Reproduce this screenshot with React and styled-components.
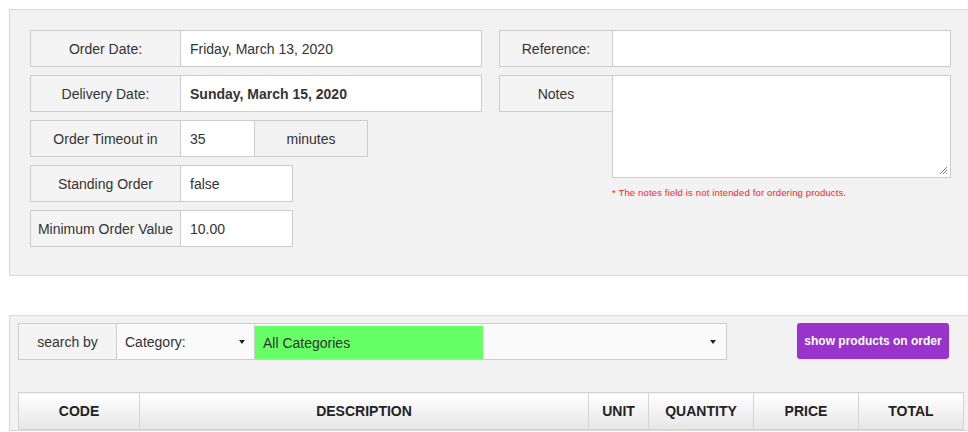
import React from "react";
import styled, { createGlobalStyle } from "styled-components";

const Global = createGlobalStyle`
  html, body { margin: 0; padding: 0; overflow: hidden; background: #fff; }
  body { font-family: "Liberation Sans", Arial, sans-serif; font-size: 14px; color: #333; }
  * { box-sizing: border-box; }
`;

const Page = styled.div`
  padding: 9px 0 0 9px;
  width: 1000px;
`;

const Panel = styled.section`
  background: #f2f2f2;
  border: 1px solid #d9d9d9;
  border-right: none;
  padding: ${(p) => p.$pad};
  margin-bottom: ${(p) => p.$mb || 0}px;
`;

const Columns = styled.div`
  display: grid;
  grid-template-columns: 452px 452px;
  column-gap: 17px;
`;

const Stack = styled.div`
  display: flex;
  flex-direction: column;
  gap: 8px;
`;

const Row = styled.div`
  display: flex;
  align-items: flex-start;
`;

const Label = styled.div`
  width: ${(p) => p.$w}px;
  height: 37px;
  flex: none;
  display: flex;
  align-items: center;
  justify-content: center;
  background: #f4f4f4;
  border: 1px solid #ccc;
  border-right: none;
  color: #333;
  white-space: nowrap;
`;

const Value = styled.div`
  width: ${(p) => p.$w}px;
  height: ${(p) => p.$h || 37}px;
  flex: none;
  display: flex;
  align-items: center;
  padding-left: 9px;
  background: #fff;
  border: 1px solid #ccc;
  font-weight: ${(p) => (p.$bold ? 700 : 400)};
  color: #333;
  position: relative;
`;

const Addon = styled.div`
  width: ${(p) => p.$w}px;
  height: 37px;
  flex: none;
  display: flex;
  align-items: center;
  justify-content: center;
  background: #f2f2f2;
  border: 1px solid #ccc;
  border-left: none;
`;

const Grip = styled.svg`
  position: absolute;
  right: 2px;
  bottom: 2px;
`;

const NotesCol = styled.div`
  display: flex;
  flex-direction: column;
`;

const Hint = styled.div`
  margin: 9px 0 0 113px;
  color: #ff1a1a;
  font-size: 9.5px;
  letter-spacing: 0.15px;
`;

const SearchBar = styled.div`
  display: flex;
  align-items: flex-start;
  height: 37px;
`;

const SearchLabel = styled.div`
  width: 98px;
  height: 37px;
  display: flex;
  align-items: center;
  justify-content: center;
  background: #f4f4f4;
  border: 1px solid #ccc;
  border-right: none;
`;

const Select = styled.div`
  width: ${(p) => p.$w}px;
  height: 37px;
  display: flex;
  align-items: ${(p) => (p.$stretch ? "stretch" : "center")};
  justify-content: space-between;
  background: #fafafa;
  border: 1px solid #ccc;
  border-right: ${(p) => (p.$noRight ? "none" : "1px solid #ccc")};
  padding: ${(p) => p.$pad};
`;

const Highlight = styled.span`
  width: 228px;
  margin-top: 2px;
  display: flex;
  align-items: center;
  padding-left: 8px;
  background: #66ff66;
  color: #333;
`;

const Caret = styled.span`
  width: 0;
  height: 0;
  align-self: center;
  border-left: 3.5px solid transparent;
  border-right: 3.5px solid transparent;
  border-top: 4px solid #222;
  margin-right: ${(p) => p.$mr}px;
`;

const Button = styled.button`
  width: 152px;
  height: 36px;
  margin-left: 70px;
  padding: 0;
  background: #9933cc;
  color: #fff;
  border: none;
  border-radius: 3px;
  font-family: "Liberation Sans", Arial, sans-serif;
  font-weight: 700;
  font-size: 12px;
  cursor: pointer;
`;

const Table = styled.table`
  margin-top: 32px;
  width: 945px;
  border-collapse: collapse;
  table-layout: fixed;
`;

const Th = styled.th`
  height: 37px;
  border: 1px solid #d4d4d4;
  background: linear-gradient(#ffffff, #e6e6e6);
  font-weight: 700;
  font-size: 14px;
  color: #222;
  text-align: center;
  padding: 0;
`;

const fields = [
  { label: "Order Date:", value: "Friday, March 13, 2020", w: 302 },
  { label: "Delivery Date:", value: "Sunday, March 15, 2020", w: 302, bold: true },
];

const cols = [
  ["CODE", 121],
  ["DESCRIPTION", 449],
  ["UNIT", 60],
  ["QUANTITY", 105],
  ["PRICE", 105],
  ["TOTAL", 105],
];

export default function App() {
  return (
    <Page>
      <Global />
      <Panel $pad="20px 0 28px 20px" $mb={39}>
        <Columns>
          <Stack>
            {fields.map((f) => (
              <Row key={f.label}>
                <Label $w={150}>{f.label}</Label>
                <Value $w={f.w} $bold={f.bold}>{f.value}</Value>
              </Row>
            ))}
            <Row>
              <Label $w={150}>Order Timeout in</Label>
              <Value $w={75}>35</Value>
              <Addon $w={113}>minutes</Addon>
            </Row>
            <Row>
              <Label $w={150}>Standing Order</Label>
              <Value $w={113}>false</Value>
            </Row>
            <Row>
              <Label $w={150}>Minimum Order Value</Label>
              <Value $w={113}>10.00</Value>
            </Row>
          </Stack>
          <Stack>
            <Row>
              <Label $w={113}>Reference:</Label>
              <Value $w={339} />
            </Row>
            <NotesCol>
              <Row>
                <Label $w={113}>Notes</Label>
                <Value $w={339} $h={103}>
                  <Grip width="9" height="9" viewBox="0 0 9 9">
                    <path d="M8 1 L1 8 M8 4 L4 8 M8 7 L7 8" stroke="#777" strokeWidth="1" />
                  </Grip>
                </Value>
              </Row>
              <Hint>* The notes field is not intended for ordering products.</Hint>
            </NotesCol>
          </Stack>
        </Columns>
      </Panel>
      <Panel $pad="7px 0 0 8px">
        <SearchBar>
          <SearchLabel>search by</SearchLabel>
          <Select $w={138} $pad="0 8px 0 8px" $noRight>
            <span>Category:</span>
            <Caret $mr={1} />
          </Select>
          <Select $w={473} $pad="0 10px 0 0" $stretch>
            <Highlight>All Categories</Highlight>
            <Caret $mr={0} />
          </Select>
          <Button>show products on order</Button>
        </SearchBar>
        <Table>
          <colgroup>
            {cols.map(([n, w]) => (
              <col key={n} style={{ width: w }} />
            ))}
          </colgroup>
          <thead>
            <tr>
              {cols.map(([n]) => (
                <Th key={n}>{n}</Th>
              ))}
            </tr>
          </thead>
        </Table>
      </Panel>
    </Page>
  );
}
